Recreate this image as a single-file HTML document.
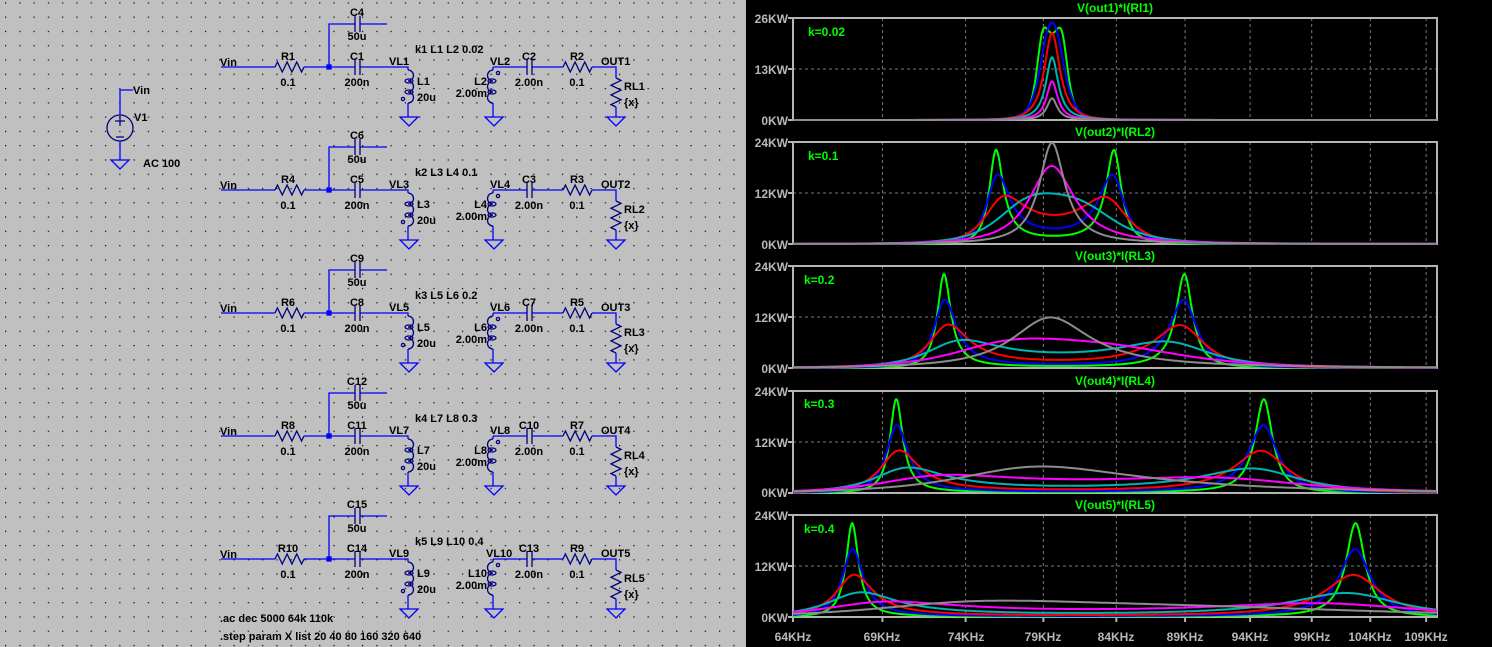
<!DOCTYPE html>
<html><head><meta charset="utf-8">
<style>
html,body{margin:0;padding:0;background:#000;}
svg{display:block;}
.s text{font-family:"Liberation Sans",Arial,sans-serif;font-weight:bold;font-size:11px;fill:#000;}
.p text{font-family:"Liberation Sans",Arial,sans-serif;font-weight:bold;font-size:12px;}
.ax{fill:#b8b8b8;}
.tt{fill:#00ff00;}
</style></head>
<body>
<svg id="svg" width="1492" height="647" viewBox="0 0 1492 647" xmlns="http://www.w3.org/2000/svg">
<defs>
<pattern id="dots" x="5" y="2.3" width="14.28" height="14.28" patternUnits="userSpaceOnUse">
<rect x="0" y="0" width="1.2" height="1.2" fill="#000"/>
</pattern>
</defs>
<rect x="0" y="0" width="746" height="647" fill="#c0c0c0"/>
<rect x="0" y="0" width="746" height="647" fill="url(#dots)"/>
<rect x="746" y="0" width="746" height="647" fill="#000"/>
<g id="sch" fill="none" stroke-width="1.3"></g>
<g class="s">
<text x="133" y="94">Vin</text>
<text x="134" y="121">V1</text>
<text x="143" y="167">AC 100</text>
<g transform="translate(0,0)">
<text x="220" y="66">Vin</text><text x="357" y="16" text-anchor="middle">C4</text><text x="357" y="40" text-anchor="middle">50u</text>
<text x="288" y="60" text-anchor="middle">R1</text><text x="288" y="86" text-anchor="middle">0.1</text>
<text x="357" y="60" text-anchor="middle">C1</text><text x="357" y="86" text-anchor="middle">200n</text>
<text x="415" y="53">k1 L1 L2 0.02</text><text x="389" y="65">VL1</text><text x="417" y="85">L1</text><text x="417" y="101">20u</text>
<text x="490" y="65">VL2</text><text x="487" y="85" text-anchor="end">L2</text><text x="487" y="97" text-anchor="end">2.00m</text>
<text x="529" y="60" text-anchor="middle">C2</text><text x="529" y="86" text-anchor="middle">2.00n</text>
<text x="577" y="60" text-anchor="middle">R2</text><text x="577" y="86" text-anchor="middle">0.1</text>
<text x="601" y="65">OUT1</text><text x="624" y="90">RL1</text><text x="624" y="106">{x}</text>
</g>
<g transform="translate(0,123)">
<text x="220" y="66">Vin</text><text x="357" y="16" text-anchor="middle">C6</text><text x="357" y="40" text-anchor="middle">50u</text>
<text x="288" y="60" text-anchor="middle">R4</text><text x="288" y="86" text-anchor="middle">0.1</text>
<text x="357" y="60" text-anchor="middle">C5</text><text x="357" y="86" text-anchor="middle">200n</text>
<text x="415" y="53">k2 L3 L4 0.1</text><text x="389" y="65">VL3</text><text x="417" y="85">L3</text><text x="417" y="101">20u</text>
<text x="490" y="65">VL4</text><text x="487" y="85" text-anchor="end">L4</text><text x="487" y="97" text-anchor="end">2.00m</text>
<text x="529" y="60" text-anchor="middle">C3</text><text x="529" y="86" text-anchor="middle">2.00n</text>
<text x="577" y="60" text-anchor="middle">R3</text><text x="577" y="86" text-anchor="middle">0.1</text>
<text x="601" y="65">OUT2</text><text x="624" y="90">RL2</text><text x="624" y="106">{x}</text>
</g>
<g transform="translate(0,246)">
<text x="220" y="66">Vin</text><text x="357" y="16" text-anchor="middle">C9</text><text x="357" y="40" text-anchor="middle">50u</text>
<text x="288" y="60" text-anchor="middle">R6</text><text x="288" y="86" text-anchor="middle">0.1</text>
<text x="357" y="60" text-anchor="middle">C8</text><text x="357" y="86" text-anchor="middle">200n</text>
<text x="415" y="53">k3 L5 L6 0.2</text><text x="389" y="65">VL5</text><text x="417" y="85">L5</text><text x="417" y="101">20u</text>
<text x="490" y="65">VL6</text><text x="487" y="85" text-anchor="end">L6</text><text x="487" y="97" text-anchor="end">2.00m</text>
<text x="529" y="60" text-anchor="middle">C7</text><text x="529" y="86" text-anchor="middle">2.00n</text>
<text x="577" y="60" text-anchor="middle">R5</text><text x="577" y="86" text-anchor="middle">0.1</text>
<text x="601" y="65">OUT3</text><text x="624" y="90">RL3</text><text x="624" y="106">{x}</text>
</g>
<g transform="translate(0,369)">
<text x="220" y="66">Vin</text><text x="357" y="16" text-anchor="middle">C12</text><text x="357" y="40" text-anchor="middle">50u</text>
<text x="288" y="60" text-anchor="middle">R8</text><text x="288" y="86" text-anchor="middle">0.1</text>
<text x="357" y="60" text-anchor="middle">C11</text><text x="357" y="86" text-anchor="middle">200n</text>
<text x="415" y="53">k4 L7 L8 0.3</text><text x="389" y="65">VL7</text><text x="417" y="85">L7</text><text x="417" y="101">20u</text>
<text x="490" y="65">VL8</text><text x="487" y="85" text-anchor="end">L8</text><text x="487" y="97" text-anchor="end">2.00m</text>
<text x="529" y="60" text-anchor="middle">C10</text><text x="529" y="86" text-anchor="middle">2.00n</text>
<text x="577" y="60" text-anchor="middle">R7</text><text x="577" y="86" text-anchor="middle">0.1</text>
<text x="601" y="65">OUT4</text><text x="624" y="90">RL4</text><text x="624" y="106">{x}</text>
</g>
<g transform="translate(0,492)">
<text x="220" y="66">Vin</text><text x="357" y="16" text-anchor="middle">C15</text><text x="357" y="40" text-anchor="middle">50u</text>
<text x="288" y="60" text-anchor="middle">R10</text><text x="288" y="86" text-anchor="middle">0.1</text>
<text x="357" y="60" text-anchor="middle">C14</text><text x="357" y="86" text-anchor="middle">200n</text>
<text x="415" y="53">k5 L9 L10 0.4</text><text x="389" y="65">VL9</text><text x="417" y="85">L9</text><text x="417" y="101">20u</text>
<text x="486" y="65">VL10</text><text x="487" y="85" text-anchor="end">L10</text><text x="487" y="97" text-anchor="end">2.00m</text>
<text x="529" y="60" text-anchor="middle">C13</text><text x="529" y="86" text-anchor="middle">2.00n</text>
<text x="577" y="60" text-anchor="middle">R9</text><text x="577" y="86" text-anchor="middle">0.1</text>
<text x="601" y="65">OUT5</text><text x="624" y="90">RL5</text><text x="624" y="106">{x}</text>
</g>
<text x="220" y="622">.ac dec 5000 64k 110k</text>
<text x="220" y="640">.step param X list 20 40 80 160 320 640</text>
</g>

<g id="plots"></g>
<g class="p">
<text class="tt" x="1115" y="12" text-anchor="middle">V(out1)*I(Rl1)</text>
<text class="tt" x="1115" y="136" text-anchor="middle">V(out2)*I(RL2)</text>
<text class="tt" x="1115" y="260" text-anchor="middle">V(out3)*I(RL3)</text>
<text class="tt" x="1115" y="385" text-anchor="middle">V(out4)*I(RL4)</text>
<text class="tt" x="1115" y="509" text-anchor="middle">V(out5)*I(RL5)</text>
<text class="tt" x="808" y="36">k=0.02</text>
<text class="tt" x="808" y="160">k=0.1</text>
<text class="tt" x="804" y="284">k=0.2</text>
<text class="tt" x="804" y="408">k=0.3</text>
<text class="tt" x="804" y="533">k=0.4</text>
<text class="ax" x="788" y="23" text-anchor="end">26KW</text>
<text class="ax" x="788" y="74" text-anchor="end">13KW</text>
<text class="ax" x="788" y="125" text-anchor="end">0KW</text>
<text class="ax" x="788" y="147" text-anchor="end">24KW</text>
<text class="ax" x="788" y="198" text-anchor="end">12KW</text>
<text class="ax" x="788" y="249" text-anchor="end">0KW</text>
<text class="ax" x="788" y="271" text-anchor="end">24KW</text>
<text class="ax" x="788" y="322" text-anchor="end">12KW</text>
<text class="ax" x="788" y="373" text-anchor="end">0KW</text>
<text class="ax" x="788" y="396" text-anchor="end">24KW</text>
<text class="ax" x="788" y="447" text-anchor="end">12KW</text>
<text class="ax" x="788" y="497" text-anchor="end">0KW</text>
<text class="ax" x="788" y="520" text-anchor="end">24KW</text>
<text class="ax" x="788" y="571" text-anchor="end">12KW</text>
<text class="ax" x="788" y="622" text-anchor="end">0KW</text>
<text class="ax" x="793" y="641" text-anchor="middle">64KHz</text>
<text class="ax" x="882" y="641" text-anchor="middle">69KHz</text>
<text class="ax" x="966" y="641" text-anchor="middle">74KHz</text>
<text class="ax" x="1043" y="641" text-anchor="middle">79KHz</text>
<text class="ax" x="1116" y="641" text-anchor="middle">84KHz</text>
<text class="ax" x="1185" y="641" text-anchor="middle">89KHz</text>
<text class="ax" x="1250" y="641" text-anchor="middle">94KHz</text>
<text class="ax" x="1312" y="641" text-anchor="middle">99KHz</text>
<text class="ax" x="1370" y="641" text-anchor="middle">104KHz</text>
<text class="ax" x="1426" y="641" text-anchor="middle">109KHz</text>
</g>
</svg>
<script>
(function(){
var NS="http://www.w3.org/2000/svg";
function el(parent,tag,attrs){var e=document.createElementNS(NS,tag);for(var k in attrs)e.setAttribute(k,attrs[k]);parent.appendChild(e);return e;}
var sch=document.getElementById('sch');
var W="#0000ff",S="#000080";
function line(d,c){el(sch,'path',{d:d,stroke:c||W});}
function ground(x,y){line('M'+(x-9)+','+y+' h18 l-9,9 z',W);}
function resH(x1,x2,y){var d='M'+x1+','+y,n=6,dx=(x2-x1)/n;d+=' l'+(dx/2)+',-5';for(var i=0;i<n-1;i++){d+=' l'+dx+','+(i%2==0?10:-10);}d+=' L'+x2+','+y;line(d,S);}
function resV(x,y1,y2){var d='M'+x+','+y1,n=6,dy=(y2-y1)/n;d+=' l5,'+(dy/2);for(var i=0;i<n-1;i++){d+=' l'+(i%2==0?-10:10)+','+dy;}d+=' L'+x+','+y2;line(d,S);}
function capH(x,y){line('M'+x+','+(y-8)+' v16 M'+(x+5)+','+(y-8)+' v16',S);}
function coil(x,y,dir){var d='M'+x+','+y;for(var i=0;i<3;i++){d+=' a5.5,5.5 0 0 '+(dir>0?1:0)+' 0,11';}line(d,S);
 for(var i=1;i<3;i++){el(sch,'ellipse',{cx:x+dir*1,cy:y+i*11,rx:4,ry:2,stroke:S});}
 el(sch,'circle',{cx:x-dir*5,cy:y+(dir>0?29:3),r:1.6,stroke:S});}
line('M133,90 H120 V115');el(sch,'circle',{cx:120,cy:128,r:13,stroke:S});
line('M115,121 h10 M120,116 v10 M116,137 h8',S);line('M120,141 V160');ground(120,160);
for(var r=0;r<5;r++){
 var o=r*123,y=67+o;
 line('M221,'+y+' H275 M304,'+y+' H355 M360,'+y+' H408 V'+(70+o));
 resH(275,304,y);capH(355,y);
 line('M329,'+y+' V'+(24+o)+' H355 M360,'+(24+o)+' H387');capH(355,24+o);
 el(sch,'rect',{x:327,y:y-2,width:4,height:4,fill:W,stroke:W});
 coil(408,70+o,1);line('M408,'+(103+o)+' V'+(117+o));ground(409,117+o);
 line('M493,'+y+' V'+(70+o)+' M493,'+y+' H527 M532,'+y+' H563 M592,'+y+' H616 V'+(78+o));
 capH(527,y);resH(563,592,y);
 coil(493,70+o,-1);line('M493,'+(103+o)+' V'+(117+o));ground(494,117+o);
 resV(616,78+o,107+o);line('M616,'+(107+o)+' V'+(117+o));ground(616,117+o);
}
var pg=document.getElementById('plots');
var X0=793,X1=1437,FMIN=64e3,FMAX=110e3;
function fx(f){return X0+(X1-X0)*Math.log(f/FMIN)/Math.log(FMAX/FMIN);}
var tops=[18,142,266,391,515],H=102,ks=[0.02,0.1,0.2,0.3,0.4],maxs=[26000,24000,24000,24000,24000];
var grids=[69,74,79,84,89,94,99,104,109];
var cols=["#00ff00","#0000ff","#ff0000","#00b4b4","#ff00ff","#8c8c8c"],RLs=[20,40,80,160,320,640];
var L1=20e-6,C1=200e-9,L2=2e-3,C2=2e-9;
for(var p=0;p<5;p++){
 var t=tops[p],b=t+H;
 grids.forEach(function(g){var x=fx(g*1e3);el(pg,'line',{x1:x,y1:t,x2:x,y2:b,stroke:"#7a7a7a","stroke-dasharray":"3,3","stroke-width":1});});
 el(pg,'line',{x1:X0,y1:t+H/2,x2:X1,y2:t+H/2,stroke:"#7a7a7a","stroke-dasharray":"3,3","stroke-width":1});
 [t,t+H/2,b].forEach(function(yy){el(pg,'line',{x1:X0-5,y1:yy,x2:X0,y2:yy,stroke:"#b4b4b4","stroke-width":2});});
 if(p==4)grids.concat([64]).forEach(function(g){var x=fx(g*1e3);el(pg,'line',{x1:x,y1:b,x2:x,y2:b+5,stroke:"#b4b4b4","stroke-width":2});});
 el(pg,'rect',{x:X0,y:t,width:X1-X0,height:H,fill:"none",stroke:"#b4b4b4","stroke-width":2});
 var k=ks[p],M=k*Math.sqrt(L1*L2);
 for(var c=0;c<6;c++){
  var RL=RLs[c],d='';
  for(var i=0;i<=900;i++){
   var f=FMIN*Math.pow(FMAX/FMIN,i/900),w=2*Math.PI*f;
   var Xp=w*L1-1/(w*C1),Rp=0.1;
   var R2=0.1+RL,X2=w*L2-1/(w*C2),m2=R2*R2+X2*X2,wm2=(w*M)*(w*M);
   var Zr=Rp+wm2*R2/m2,Zi=Xp-wm2*X2/m2;
   var I1=100/Math.sqrt(Zr*Zr+Zi*Zi),I2=w*M*I1/Math.sqrt(m2);
   var P=I2*I2*RL,y=b-P/maxs[p]*H;if(y<t)y=t;
   d+=(i?'L':'M')+fx(f).toFixed(1)+','+y.toFixed(1);
  }
  el(pg,'path',{d:d,fill:"none",stroke:cols[c],"stroke-width":2});
 }
}
})();
</script>
</body></html>
